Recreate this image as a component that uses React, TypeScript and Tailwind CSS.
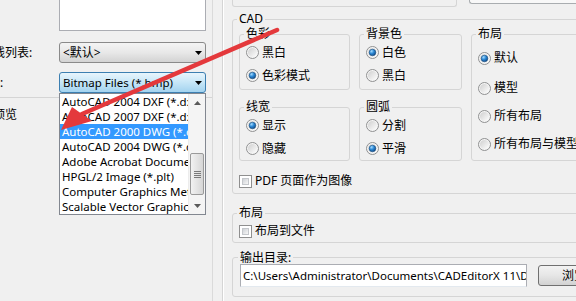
import React from "react";

const formats = [
  "AutoCAD 2004 DXF (*.dxf)",
  "AutoCAD 2007 DXF (*.dxf)",
  "AutoCAD 2000 DWG (*.dwg)",
  "AutoCAD 2004 DWG (*.dwg)",
  "Adobe Acrobat Document (*.pdf)",
  "HPGL/2 Image (*.plt)",
  "Computer Graphics Metafile (*.cgm)",
  "Scalable Vector Graphics (*.svg)",
];

const Radio = ({ checked = false }: { checked?: boolean }) => (
  <svg width="13" height="13" viewBox="0 0 13 13" className="shrink-0">
    <defs>
      <linearGradient id="radioFill" x1="0" y1="0" x2="1" y2="1">
        <stop offset="0" stopColor="#cfcfcf" />
        <stop offset="1" stopColor="#fefefe" />
      </linearGradient>
      <radialGradient id="radioDot" cx="0.35" cy="0.3" r="0.8">
        <stop offset="0" stopColor="#a6dcff" />
        <stop offset="0.45" stopColor="#2c89d6" />
        <stop offset="1" stopColor="#0d3f7a" />
      </radialGradient>
    </defs>
    <circle cx="6.5" cy="6.5" r="6" fill="#f5f5f5" stroke="#8f9091" />
    <circle cx="6.5" cy="6.5" r="4.6" fill="url(#radioFill)" />
    {checked && (
      <circle cx="6.5" cy="6.5" r="3.3" fill="url(#radioDot)" stroke="#174d80" strokeWidth="0.6" />
    )}
  </svg>
);

const Check = () => (
  <span className="flex w-[13px] h-[13px] shrink-0 border border-[#8f8f8f] bg-white p-[2px]">
    <span className="flex-1 border border-[#c4c7cb] bg-gradient-to-br from-[#cfd2d6] to-[#f7f7f7]" />
  </span>
);

const DownArrow = () => (
  <svg width="7" height="4" viewBox="0 0 7 4" className="shrink-0">
    <polygon points="0,0 7,0 3.5,4" fill="#000" />
  </svg>
);

const Group = ({
  title,
  className,
  children,
}: {
  title: string;
  className: string;
  children: React.ReactNode;
}) => (
  <fieldset className={`min-w-0 border border-[#d5d5d5] rounded-[3px] ${className}`}>
    <legend className="ml-[-2px] px-[2px] leading-[14px]">{title}</legend>
    {children}
  </fieldset>
);

const RadioRow = ({ label, checked, h }: { label: string; checked?: boolean; h: string }) => (
  <div className={`flex items-center gap-[3px] whitespace-nowrap ${h}`}>
    <Radio checked={checked} />
    <span>{label}</span>
  </div>
);

const LeftPanel = () => (
  <div className="relative w-[213px] shrink-0 border-r border-[#dadada] flex flex-col">
    <div className="ml-[59px] w-[147px] h-[31px] bg-white border-x border-b border-[#abadb3]" />

    <div className="mt-[11px] flex items-center h-[21px]">
      <div className="w-[59px] overflow-hidden whitespace-nowrap">
        <span className="ml-[-7px]">线列表:</span>
      </div>
      <div className="w-[147px] h-[21px] rounded-[3px] border border-[#8a8a8a] bg-gradient-to-b from-[#f4f4f4] via-[#e8e8e8] to-[#d3d3d3] flex items-center justify-between pl-[3px] pr-[3px]">
        <span>&lt;默认&gt;</span>
        <DownArrow />
      </div>
    </div>

    <div className="mt-[9px] flex items-center h-[21px]">
      <div className="w-[59px] overflow-hidden whitespace-nowrap">
        <span className="ml-[-24px]">格式:</span>
      </div>
      <div className="w-[147px] h-[21px] rounded-[3px] border border-[#3c7fb1] bg-gradient-to-b from-[#e8f5fc] via-[#c6e6f7] to-[#a3d3ef] flex items-center justify-between pl-[3px] pr-[3px]">
        <span className="whitespace-nowrap text-[11.5px]">Bitmap Files (*.bmp)</span>
        <DownArrow />
      </div>
    </div>

    <div className="mt-[4px] h-px bg-[#d5d5d5]" />
    <div className="mt-[10px] h-[14px] overflow-hidden whitespace-nowrap">
      <span className="ml-[-7px]">预览</span>
    </div>

    {/* open drop-down list of the format combo */}
    <div className="absolute left-[59px] top-[93px] w-[147px] h-[122px] border border-[#828790] bg-white flex">
      <div className="flex-1 min-w-0 flex flex-col text-[11.5px]">
        {formats.map((f, i) => (
          <div
            key={f}
            className={
              i === 2
                ? "h-[15px] leading-[15px] pl-[2px] whitespace-nowrap overflow-hidden bg-[#3399ff] text-white"
                : "h-[15px] leading-[15px] pl-[2px] whitespace-nowrap overflow-hidden"
            }
          >
            {f}
          </div>
        ))}
      </div>
      <div className="w-[17px] shrink-0 flex flex-col bg-[#f4f4f4] border-l border-[#ececec]">
        <div className="h-[17px] flex items-center justify-center">
          <svg width="7" height="4" viewBox="0 0 7 4">
            <polygon points="0,4 7,4 3.5,0" fill="#5a5a5a" />
          </svg>
        </div>
        <div className="mt-[42px] mx-[1px] h-[42px] rounded-[2px] border border-[#9a9a9a] bg-gradient-to-r from-[#f2f2f2] to-[#d6d6d6] flex flex-col items-center justify-center gap-[1px]">
          <div className="w-[7px] h-px bg-[#7a7a7a]" />
          <div className="w-[7px] h-px bg-[#7a7a7a]" />
          <div className="w-[7px] h-px bg-[#7a7a7a]" />
          <div className="w-[7px] h-px bg-[#7a7a7a]" />
        </div>
        <div className="flex-1" />
        <div className="h-[17px] flex items-center justify-center">
          <svg width="7" height="4" viewBox="0 0 7 4">
            <polygon points="0,0 7,0 3.5,4" fill="#5a5a5a" />
          </svg>
        </div>
      </div>
    </div>
  </div>
);

const RightPanel = () => (
  <div className="flex-1 min-w-0 overflow-hidden border-l border-[#d5d5d5] shadow-[inset_1px_0_0_#ffffff] pl-[9px]">
    <div className="flex items-start h-[7px]">
      <div className="w-[251px] h-[7px] border-x border-b border-[#d5d5d5] rounded-b-[3px]" />
      <div className="ml-[12px] w-[120px] h-[4px] border-l border-b border-[#a9adb0] rounded-bl-[3px] bg-[#f8f8f8]" />
    </div>

    <Group title="CAD" className="mt-[5px] w-[380px] pl-[6px] pb-[5px]">
      <div className="mt-[1px] flex items-start gap-[9px]">
        <div className="flex flex-col">
          <div className="flex gap-[9px]">
            <Group title="色彩" className="w-[111px] pl-[6px] pb-[2px]">
              <RadioRow label="黑白" h="h-[23px]" />
              <RadioRow label="色彩模式" checked h="h-[23px]" />
            </Group>
            <Group title="背景色" className="w-[103px] pl-[6px] pb-[2px]">
              <RadioRow label="白色" checked h="h-[23px]" />
              <RadioRow label="黑白" h="h-[23px]" />
            </Group>
          </div>
          <div className="mt-[10px] flex gap-[9px]">
            <Group title="线宽" className="w-[111px] pl-[6px]">
              <RadioRow label="显示" checked h="h-[23px]" />
              <RadioRow label="隐藏" h="h-[23px]" />
            </Group>
            <Group title="圆弧" className="w-[103px] pl-[6px]">
              <RadioRow label="分割" h="h-[23px]" />
              <RadioRow label="平滑" checked h="h-[23px]" />
            </Group>
          </div>
        </div>
        <Group title="布局" className="w-[140px] pl-[6px] pb-[8px]">
          <div className="mt-[9px] flex flex-col gap-[12px]">
            <div className="mb-[2px]">
              <RadioRow label="默认" checked h="h-[16px]" />
            </div>
            <RadioRow label="模型" h="h-[16px]" />
            <RadioRow label="所有布局" h="h-[16px]" />
            <RadioRow label="所有布局与模型" h="h-[16px]" />
          </div>
        </Group>
      </div>
      <div className="mt-[13px] h-[14px] flex items-center gap-[3px] whitespace-nowrap">
        <Check />
        <span>PDF 页面作为图像</span>
      </div>
    </Group>

    <Group title="布局" className="mt-[12px] w-[380px] pl-[6px] pb-[4px]">
      <div className="mt-[4px] h-[14px] flex items-center gap-[3px] whitespace-nowrap">
        <Check />
        <span>布局到文件</span>
      </div>
    </Group>

    <fieldset className="mt-[8px] w-[380px] min-w-0 border border-[#d5d5d5] rounded-[3px] pl-[7px] pb-[9px]">
      <legend className="ml-[-2px] px-[2px] leading-[13px]">输出目录:</legend>
      <div className="flex items-center">
        <div className="w-[287px] h-[23px] shrink-0 bg-white border border-[#abadb3] border-b-[#e3e9ef] pl-[2px] pr-[2px] leading-[21px] text-[11.5px] whitespace-nowrap overflow-hidden">
          {"C:\\Users\\Administrator\\Documents\\CADEditorX 11\\Drawings"}
        </div>
        <div className="ml-[11px] w-[72px] h-[21px] shrink-0 rounded-[3px] border border-[#707070] bg-gradient-to-b from-[#f3f3f3] via-[#e6e6e6] to-[#d2d2d2] flex items-center justify-center whitespace-nowrap">
          浏览
        </div>
      </div>
    </fieldset>
  </div>
);

const Pointer = () => (
  <svg
    className="absolute inset-0 pointer-events-none"
    width="576"
    height="301"
    viewBox="0 0 576 301"
  >
    <line x1="82" y1="114" x2="277" y2="30" stroke="#e4393c" strokeWidth="4.5" strokeLinecap="round" />
    <polygon points="61,130 72,107 92,121" fill="#e4393c" />
  </svg>
);

export default function App() {
  return (
    <div className="relative w-[576px] h-[301px] overflow-hidden bg-[#f0f0f0] flex text-[12px] leading-[14px] text-black font-['Noto_Sans','Noto_Sans_CJK_SC',sans-serif]">
      <LeftPanel />
      <div className="w-[9px] shrink-0" />
      <RightPanel />
      <Pointer />
    </div>
  );
}
